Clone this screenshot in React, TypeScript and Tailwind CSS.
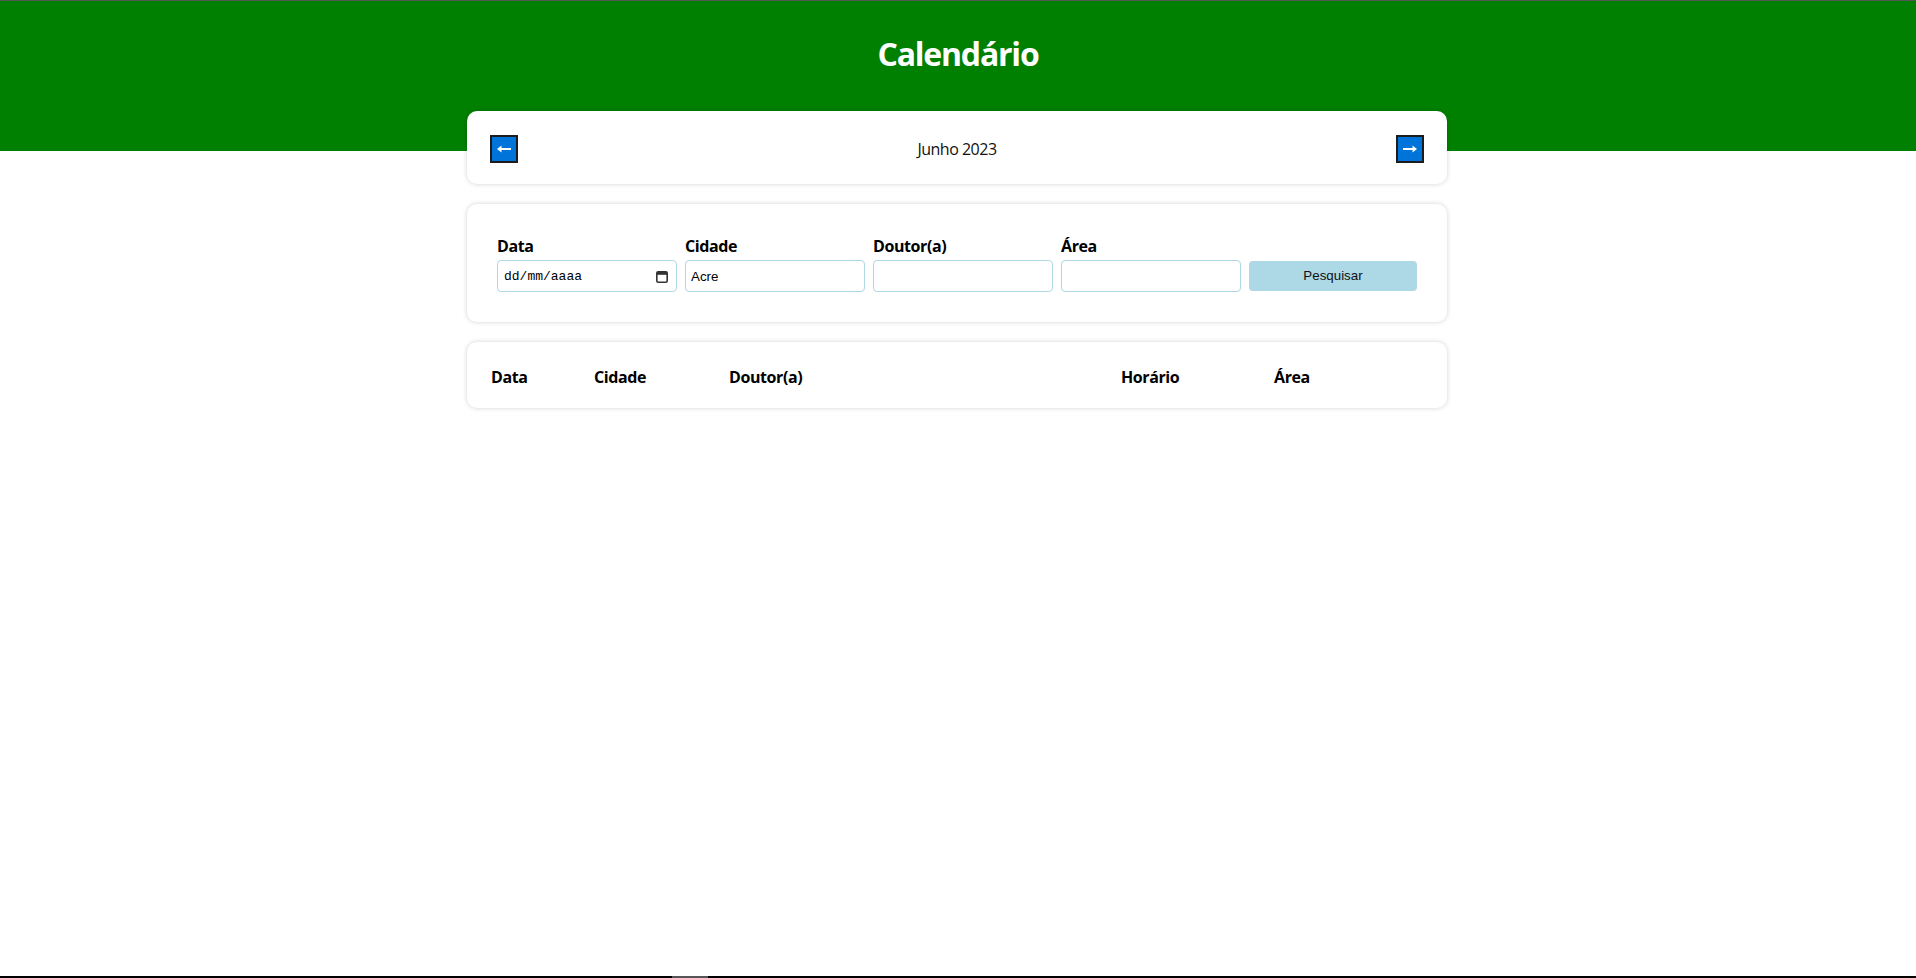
import React from "react";

function Field({ label, children }: { label: string; children: React.ReactNode }) {
  return (
    <div className="flex flex-col">
      <label className="text-[16px] leading-[24px] font-bold text-black mb-[2px] tracking-[-0.4px] font-['Open_Sans',sans-serif]">{label}</label>
      {children}
    </div>
  );
}

function Arrow({ dir }: { dir: "left" | "right" }) {
  return (
    <svg width="16" height="10" viewBox="0 0 16 10" className={dir === "right" ? "" : "-scale-x-100"}>
      <path d="M1 5 H13" stroke="white" strokeWidth="2" />
      <path d="M10.5 1.5 L15 5 L10.5 8.5 Z" fill="white" />
    </svg>
  );
}

export default function App() {
  return (
    <div className="min-h-screen bg-white relative font-['Open_Sans',sans-serif]">
      <div className="h-[1px] bg-[#555555]" />
      <header className="bg-[#008000] h-[150px]">
        <h1 className="text-center text-white font-bold text-[32px] leading-[40px] pt-[33px] font-['Open_Sans',sans-serif] tracking-[-1.2px]">
          Calendário
        </h1>
      </header>
      <div className="pr-[2px]">
        <main className="w-[980px] mx-auto -mt-[40px] flex flex-col gap-[20px]">
          <section className="bg-white rounded-[10px] shadow-[0_0_5px_rgba(0,0,0,0.18)] pt-[24px] pb-[21px] px-[23px] flex items-center justify-between">
            <button className="w-[28px] h-[28px] bg-[#0074d9] border-2 border-[#1c1c1c] flex items-center justify-center">
              <Arrow dir="left" />
            </button>
            <span className="text-[16px] text-[#111] tracking-[-0.5px] font-['Open_Sans',sans-serif]">Junho 2023</span>
            <button className="w-[28px] h-[28px] bg-[#0074d9] border-2 border-[#1c1c1c] flex items-center justify-center">
              <Arrow dir="right" />
            </button>
          </section>

          <section className="bg-white rounded-[10px] shadow-[0_0_5px_rgba(0,0,0,0.18)] px-[30px] pt-[30px] pb-[30px]">
            <div className="grid grid-cols-[180px_180px_180px_180px_168px] gap-x-[8px] items-end">
              <Field label="Data">
                <div className="h-[32px] border border-[#add8e6] rounded-[4px] flex items-center justify-between pl-[6px] pr-[8px]">
                  <span className="font-['Liberation_Mono',monospace] text-[13px] text-black pt-[2px]">dd/mm/aaaa</span>
                  <svg width="12" height="13" viewBox="0 0 12 13">
                    <rect x="0.8" y="1.8" width="10.4" height="10.4" rx="1.5" fill="none" stroke="#333" strokeWidth="1.6" />
                    <rect x="0.8" y="1.8" width="10.4" height="3" fill="#333" />
                  </svg>
                </div>
              </Field>
              <Field label="Cidade">
                <input
                  defaultValue="Acre"
                  className="h-[32px] border border-[#add8e6] rounded-[4px] px-[5px] font-['Liberation_Sans',Arial,sans-serif] text-[13.33px] text-black outline-none"
                />
              </Field>
              <Field label="Doutor(a)">
                <input className="h-[32px] border border-[#add8e6] rounded-[4px] px-[5px] font-['Liberation_Sans',Arial,sans-serif] text-[13.33px] outline-none" />
              </Field>
              <Field label="Área">
                <input className="h-[32px] border border-[#add8e6] rounded-[4px] px-[5px] font-['Liberation_Sans',Arial,sans-serif] text-[13.33px] outline-none" />
              </Field>
              <button className="h-[30px] mb-[1px] bg-[#add8e6] rounded-[4px] font-['Liberation_Sans',Arial,sans-serif] text-[13.33px] text-[#111]">
                Pesquisar
              </button>
            </div>
          </section>

          <section className="bg-white rounded-[10px] shadow-[0_0_5px_rgba(0,0,0,0.18)] px-[24px] pt-[26px] pb-[22px]">
            <div className="grid grid-cols-[103px_135px_392px_153px_1fr] text-[16px] leading-[18px] font-bold text-black tracking-[-0.4px]">
              <div>Data</div>
              <div>Cidade</div>
              <div>Doutor(a)</div>
              <div>Horário</div>
              <div>Área</div>
            </div>
          </section>
        </main>
      </div>
      <div className="fixed bottom-0 left-0 right-0 h-[2px] bg-black">
        <div className="absolute left-[672px] top-0 h-[2px] w-[36px] bg-[#555]" />
      </div>
    </div>
  );
}
